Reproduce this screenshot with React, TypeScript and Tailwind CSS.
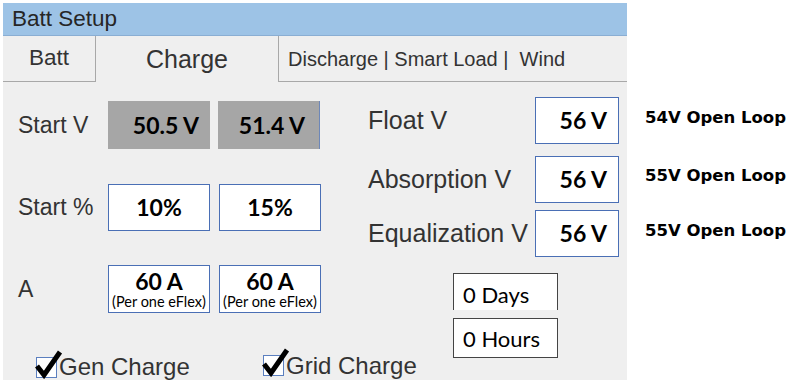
import React from 'react';

const label = "text-[#333] font-['Liberation_Sans',Arial,sans-serif] leading-none";
const value = "font-['Lato',sans-serif] font-bold text-[23px] text-black";

function CheckItem({ text }: { text: string }) {
  return (
    <div className="flex items-center whitespace-nowrap shrink-0">
      <div className="relative w-[21px] h-[21px] border border-[#5b7fbf] bg-white shrink-0">
        <svg className="absolute -left-[2px] -top-[9px]" width="28" height="30" viewBox="0 0 28 30">
          <path d="M2 17 L9 26 L25 3" fill="none" stroke="#000" strokeWidth="5" strokeLinejoin="miter" />
        </svg>
      </div>
      <span className={label + ' ml-[2px] text-[24px]'}>{text}</span>
    </div>
  );
}

export default function App() {
  return (
    <div className="w-[800px] h-[383px] bg-white flex">
      <div className="ml-[3px] mt-[3px] w-[624px] h-[377px] bg-[#efefef] flex flex-col shrink-0">
        <div className="h-[33px] shrink-0 bg-[#9dc3e6] border-b border-[#8aaed3] flex items-center pl-[9px]">
          <span className="text-[22.5px] text-[#262626] font-['Liberation_Sans',Arial,sans-serif]">Batt Setup</span>
        </div>
        <div className="h-[46px] shrink-0 flex">
          <div className="w-[93px] border-r border-b border-[#a8a8a8] flex items-center justify-center">
            <span className={label + ' text-[22.5px]'}>Batt</span>
          </div>
          <div className="w-[182px] flex items-center justify-center">
            <span className={label + ' text-[25px]'}>Charge</span>
          </div>
          <div className="flex-1 border-l border-b border-[#a8a8a8] flex items-center pl-[9px]">
            <span className="text-[20px] text-[#333] font-['Liberation_Sans',Arial,sans-serif] whitespace-pre">Discharge | Smart Load |  Wind</span>
          </div>
        </div>

        <div className="flex flex-1 min-h-0">
          {/* left column */}
          <div className="w-[365px] shrink-0 pl-[15px] pt-[19px] flex flex-col">
            <div className="flex items-center h-[48px] shrink-0">
              <span className={label + ' w-[90px] text-[23px]'}>Start V</span>
              <div className="flex gap-[8px]">
                <div className={'w-[102px] h-[48px] bg-[#a6a6a6] flex items-center justify-end pr-[11px] ' + value}>50.5 V</div>
                <div className={'w-[102px] h-[48px] bg-[#a6a6a6] border-r border-[#6d87b8] flex items-center justify-end pr-[14px] ' + value}>51.4 V</div>
              </div>
            </div>
            <div className="flex items-center h-[47px] mt-[35px] shrink-0">
              <span className={label + ' w-[90px] text-[23px]'}>Start %</span>
              <div className="flex gap-[9px]">
                <div className={'w-[102px] h-[47px] bg-white border border-[#4a6fb5] flex items-center justify-center ' + value}>10%</div>
                <div className={'w-[102px] h-[47px] bg-white border border-[#4a6fb5] flex items-center justify-center ' + value}>15%</div>
              </div>
            </div>
            <div className="flex items-center h-[48px] mt-[34px] shrink-0">
              <span className={label + ' w-[90px] text-[23px]'}>A</span>
              <div className="flex gap-[9px]">
                {[0, 1].map(i => (
                  <div key={i} className="w-[102px] h-[48px] bg-white border border-[#4a6fb5] flex flex-col items-center justify-center">
                    <span className={value + ' leading-[24px]'}>60 A</span>
                    <span className="font-['Lato',sans-serif] text-[14.5px] leading-[17px] text-black whitespace-nowrap">(Per one eFlex)</span>
                  </div>
                ))}
              </div>
            </div>
            <div className="flex mt-[42px] pl-[18px] h-[21px] shrink-0">
              <div className="w-[227px] shrink-0">
                <CheckItem text="Gen Charge" />
              </div>
              <CheckItem text="Grid Charge" />
            </div>
          </div>

          {/* right column */}
          <div className="flex-1 pt-[15px] flex flex-col">
            <div className="flex items-center h-[47px] shrink-0">
              <span className={label + ' w-[167px] text-[25px]'}>Float V</span>
              <div className={'w-[84px] h-[47px] bg-white border border-[#4a6fb5] flex items-center justify-end pr-[11px] ' + value}>56 V</div>
            </div>
            <div className="flex items-center h-[47px] mt-[12px] shrink-0">
              <span className={label + ' w-[167px] text-[25px]'}>Absorption V</span>
              <div className={'w-[84px] h-[47px] bg-white border border-[#4a6fb5] flex items-center justify-end pr-[11px] ' + value}>56 V</div>
            </div>
            <div className="flex items-center h-[47px] mt-[7px] shrink-0">
              <span className={label + ' w-[167px] text-[25px] whitespace-nowrap'}>Equalization V</span>
              <div className={'w-[84px] h-[47px] bg-white border border-[#4a6fb5] flex items-center justify-end pr-[11px] ' + value}>56 V</div>
            </div>
            <div className="ml-[85px] mt-[16px] w-[105px] h-[37px] shrink-0 bg-white border-t border-l border-r border-[#444] flex items-end pl-[9px]">
              <span className="font-['Lato',sans-serif] text-[22px] text-black leading-[30px]">0 Days</span>
            </div>
            <div className="ml-[85px] mt-[8px] w-[105px] h-[40px] shrink-0 bg-white border border-[#444] flex items-center pl-[9px]">
              <span className="font-['Lato',sans-serif] text-[22px] text-black">0 Hours</span>
            </div>
          </div>
        </div>
      </div>

      {/* annotations */}
      <div className="ml-[18px] pt-[108px] flex flex-col font-['DejaVu_Sans',sans-serif] font-bold text-[16.5px] text-black whitespace-nowrap leading-[20px]">
        <span>54V Open Loop</span>
        <span className="mt-[38px]">55V Open Loop</span>
        <span className="mt-[35px]">55V Open Loop</span>
      </div>
    </div>
  );
}
